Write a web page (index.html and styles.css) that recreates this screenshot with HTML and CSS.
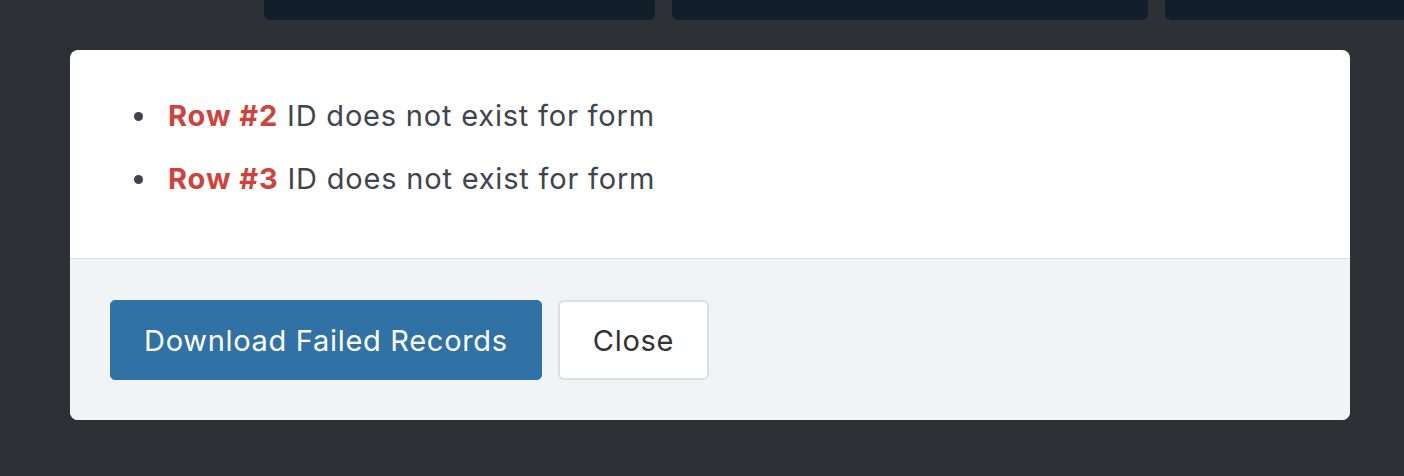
FILE: index.html
```html
<!DOCTYPE html>
<html lang="en">
<head>
    <meta charset="UTF-8">
    <meta name="viewport" content="width=device-width, initial-scale=1.0">
    <title>Import Results</title>
    <link rel="stylesheet" href="styles.css">
</head>
<body>
    <div class="page">
        <div class="card-row">
            <div class="card card-a"></div>
            <div class="card card-b"></div>
            <div class="card card-c"></div>
        </div>
        <div class="modal">
            <div class="modal-body">
                <ul class="error-list">
                    <li><strong>Row #2</strong> ID does not exist for form</li>
                    <li><strong>Row #3</strong> ID does not exist for form</li>
                </ul>
            </div>
            <div class="modal-footer">
                <button class="btn btn-primary">Download Failed Records</button>
                <button class="btn btn-default">Close</button>
            </div>
        </div>
    </div>
</body>
</html>
```

FILE: styles.css
```css
/* Page */
html, body {
    margin: 0;
    padding: 0;
    width: 100%;
    height: 100%;
    background-color: #2d3035;
    font-family: Inter, Roboto, "Liberation Sans", Arial, sans-serif;
    overflow: hidden;
}

.page {
    display: flex;
    flex-direction: column;
}

/* Cards peeking behind the dialog */
.card-row {
    display: flex;
    gap: 17px;
    height: 20px;
    padding-left: 264px;
    overflow: hidden;
}

.card {
    height: 20px;
    background-color: #131e2b;
    border-radius: 0 0 6px 6px;
    flex-shrink: 0;
}

.card-a {
    width: 391px;
}

.card-b {
    width: 476px;
}

.card-c {
    width: 300px;
}

/* Dialog */
.modal {
    margin: 30px 0 0 70px;
    width: 1280px;
    border-radius: 8px;
    overflow: hidden;
    background-color: #ffffff;
}

.modal-body {
    height: 208px;
    box-sizing: border-box;
    padding: 45px 40px 0 98px;
}

.error-list {
    margin: 0;
    padding: 0;
    list-style: none;
    display: flex;
    flex-direction: column;
    gap: 21px;
}

.error-list li {
    position: relative;
    font-size: 29px;
    letter-spacing: 0.8px;
    line-height: 42px;
    color: #40454d;
}

.error-list li::before {
    content: "";
    position: absolute;
    left: -34px;
    top: 17px;
    width: 9px;
    height: 9px;
    border-radius: 50%;
    background-color: #40454d;
}

.error-list strong {
    color: #cf433a;
    font-weight: 700;
    letter-spacing: 0.9px;
}

.modal-footer {
    border-top: 1px solid #d9dbde;
    background-color: #f2f3f5;
    padding: 41px 40px 40px;
    display: flex;
    gap: 16px;
}

.btn {
    height: 80px;
    padding: 0 33px;
    font-family: inherit;
    font-size: 29px;
    letter-spacing: 0.7px;
    border-radius: 5px;
    cursor: pointer;
}

.btn-primary {
    background-color: #3071a6;
    border: 1px solid #3071a6;
    color: #ffffff;
}

.btn-default {
    background-color: #ffffff;
    border: 2px solid #dcdee1;
    color: #2f3237;
    border-radius: 6px;
}
```
